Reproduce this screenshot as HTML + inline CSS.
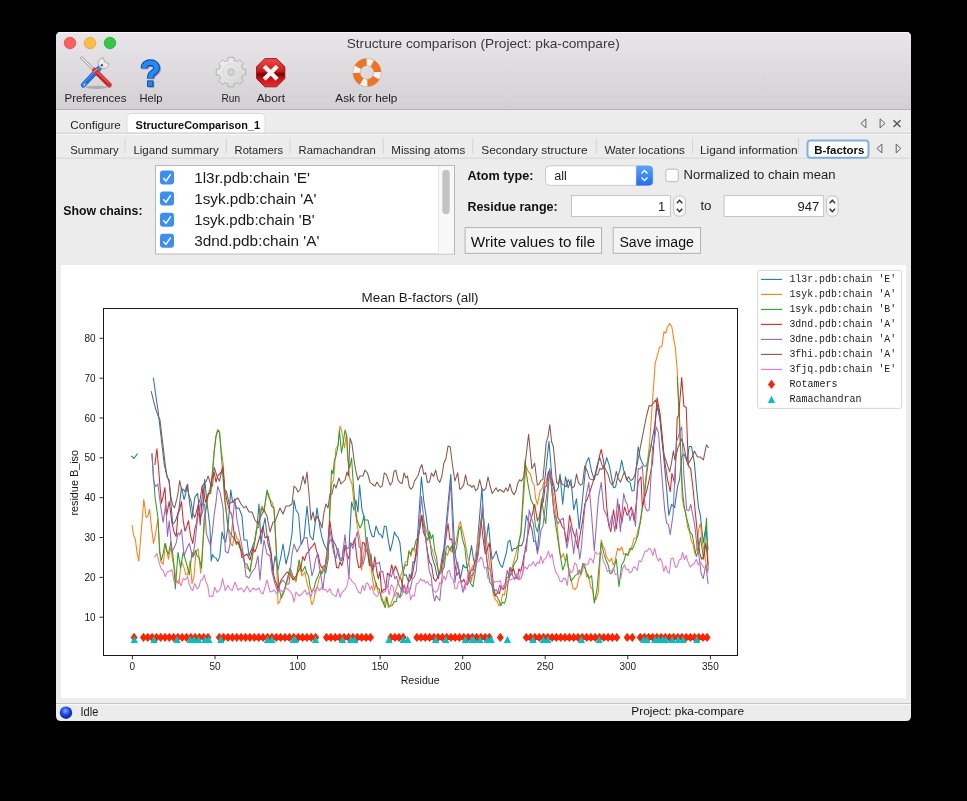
<!DOCTYPE html>
<html><head><meta charset="utf-8"><title>Structure comparison</title>
<style>html,body{margin:0;padding:0;background:#000;overflow:hidden}svg{display:block;will-change:transform}</style></head>
<body><svg width="967" height="801" viewBox="0 0 967 801">
<rect width="967" height="801" fill="#000"/>
<defs><linearGradient id="tb" x1="0" y1="0" x2="0" y2="1"><stop offset="0" stop-color="#e8e6e8"/><stop offset="1" stop-color="#d2d0d2"/></linearGradient><clipPath id="win"><path d="M61,32 H906 Q911,32 911,37 V716 Q911,721 906,721 H61 Q56,721 56,716 V37 Q56,32 61,32Z"/></clipPath><radialGradient id="sph" cx="0.45" cy="0.35" r="0.6"><stop offset="0" stop-color="#8fb0ff"/><stop offset="0.5" stop-color="#1f4df0"/><stop offset="1" stop-color="#0a20a0"/></radialGradient><linearGradient id="stop" x1="0" y1="0" x2="0" y2="1"><stop offset="0" stop-color="#f04a4a"/><stop offset="0.45" stop-color="#d01818"/><stop offset="0.55" stop-color="#7a0000"/><stop offset="0.7" stop-color="#c81010"/><stop offset="1" stop-color="#e83030"/></linearGradient><linearGradient id="gear" x1="0" y1="0" x2="1" y2="1"><stop offset="0" stop-color="#f2f2f2"/><stop offset="1" stop-color="#d2d2d2"/></linearGradient><linearGradient id="combo" x1="0" y1="0" x2="0" y2="1"><stop offset="0" stop-color="#5aa2fa"/><stop offset="1" stop-color="#1f6ff0"/></linearGradient><clipPath id="axclip"><rect x="103.8" y="308.9" width="633.2" height="346"/></clipPath></defs>
<g clip-path="url(#win)">
<rect x="56" y="32" width="855" height="689" fill="#ececec"/>
<rect x="56" y="32" width="855" height="77" fill="url(#tb)"/>
<rect x="56" y="32" width="855" height="1" fill="#f6f6f6"/>
<rect x="56" y="109" width="855" height="1" fill="#b6b4b6"/>
</g>
<circle cx="70" cy="43" r="5.8" fill="#fc605c" stroke="#e0443e" stroke-width="0.7"/>
<circle cx="90" cy="43" r="5.8" fill="#fdbc40" stroke="#dea236" stroke-width="0.7"/>
<circle cx="110" cy="43" r="5.8" fill="#34c84a" stroke="#1aab29" stroke-width="0.7"/>
<text x="346.7" y="47.5" font-family="Liberation Sans" font-size="13" font-weight="400" fill="#3a3a3a" textLength="273" lengthAdjust="spacingAndGlyphs">Structure comparison (Project: pka-compare)</text>
<ellipse cx="96.5" cy="87.3" rx="11" ry="1.6" fill="#8a8a8a" opacity="0.55"/>
<line x1="81.4" y1="57.8" x2="95" y2="70.8" stroke="#8c8c8c" stroke-width="2.6" stroke-linecap="round"/>
<line x1="81.4" y1="57.8" x2="95" y2="70.8" stroke="#f4f4f4" stroke-width="1.3" stroke-linecap="round"/>
<line x1="99.5" y1="68" x2="83.4" y2="85" stroke="#1f5fc8" stroke-width="5.2" stroke-linecap="round"/>
<line x1="99.5" y1="68" x2="83.4" y2="85" stroke="#3c8cf0" stroke-width="3.4" stroke-linecap="round"/>
<line x1="95" y1="74" x2="86" y2="83" stroke="#1e62d0" stroke-width="1.2" stroke-linecap="round"/>
<circle cx="84.6" cy="84.6" r="0.8" fill="#e8f0ff"/>
<path d="M108.98,63.67 A5.4,5.4 0 1 1 103.13,57.82 L104.80,62.00 Z" fill="#ececec" stroke="#9a9a9a" stroke-width="0.8"/>
<circle cx="101.9" cy="65.2" r="1.2" fill="#555"/>
<path d="M93.2,71.3 L96.2,68.6 L110.8,83.6 Q111.2,86.6 108.2,86.4 Z" fill="#b81e1e"/>
<line x1="94.5" y1="70.2" x2="109.3" y2="85" stroke="#d93434" stroke-width="5" stroke-linecap="round"/>
<line x1="97" y1="74.5" x2="108" y2="85" stroke="#a81616" stroke-width="1.3" stroke-linecap="round" opacity="0.7"/>
<line x1="97.5" y1="72.5" x2="108.5" y2="83" stroke="#f09090" stroke-width="0.8" stroke-linecap="round" opacity="0.8"/>
<line x1="93.5" y1="72.2" x2="97" y2="69" stroke="#f6e0e0" stroke-width="0.9"/>
<g transform="translate(0.9,0.9)" opacity="0.45"><path d="M144,68.3 C144,64.5 146.8,62.6 150.3,62.6 C154,62.6 156.6,64.7 156.6,67.6 C156.6,70.4 154.5,71.6 152.5,73.1 C150.8,74.4 150.3,75.5 150.3,78.4" fill="none" stroke="#2a1a70" stroke-width="6.8"/><rect x="147.3" y="80.7" width="6" height="6" fill="#2a1a70"/></g>
<path d="M144,68.3 C144,64.5 146.8,62.6 150.3,62.6 C154,62.6 156.6,64.7 156.6,67.6 C156.6,70.4 154.5,71.6 152.5,73.1 C150.8,74.4 150.3,75.5 150.3,78.4" fill="none" stroke="#163a8c" stroke-width="6.6"/>
<rect x="147.6" y="80.9" width="5.4" height="5.4" fill="#1c8dff" stroke="#163a8c" stroke-width="0.9"/>
<path d="M144,68.3 C144,64.5 146.8,62.6 150.3,62.6 C154,62.6 156.6,64.7 156.6,67.6 C156.6,70.4 154.5,71.6 152.5,73.1 C150.8,74.4 150.3,75.5 150.3,78.4" fill="none" stroke="#1c8dff" stroke-width="4.9"/>
<path d="M242.82,69.08 L245.73,69.27 L245.73,74.93 L242.82,75.12 L241.49,78.32 L243.42,80.51 L239.41,84.52 L237.22,82.59 L234.02,83.92 L233.83,86.83 L228.17,86.83 L227.98,83.92 L224.78,82.59 L222.59,84.52 L218.58,80.51 L220.51,78.32 L219.18,75.12 L216.27,74.93 L216.27,69.27 L219.18,69.08 L220.51,65.88 L218.58,63.69 L222.59,59.68 L224.78,61.61 L227.98,60.28 L228.17,57.37 L233.83,57.37 L234.02,60.28 L237.22,61.61 L239.41,59.68 L243.42,63.69 L241.49,65.88Z" fill="url(#gear)" stroke="#a6a6a6" stroke-width="0.8"/>
<circle cx="231" cy="72.1" r="8" fill="none" stroke="#dcdcdc" stroke-width="1"/>
<circle cx="231" cy="72.1" r="3.3" fill="#d6d4d6" stroke="#a8a8a8" stroke-width="0.7"/>
<path d="M284.84,78.56 L276.56,86.84 L264.84,86.84 L256.56,78.56 L256.56,66.84 L264.84,58.56 L276.56,58.56 L284.84,66.84Z" fill="url(#stop)" stroke="#8a0a0a" stroke-width="0.8"/>
<path d="M264.2,66.2 L277.2,79.2 M277.2,66.2 L264.2,79.2" stroke="#f4f4f4" stroke-width="4.2" stroke-linecap="butt"/>
<circle cx="367" cy="72.5" r="10.5" fill="none" stroke="#7b7b9a" stroke-width="8" opacity="0.35"/>
<circle cx="367" cy="72.5" r="10.5" fill="none" stroke="#f2731f" stroke-width="7"/>
<path d="M377.49,72.13 A10.5,10.5 0 0 1 376.09,77.75" fill="none" stroke="#f4f4f4" stroke-width="7"/>
<path d="M367.37,82.99 A10.5,10.5 0 0 1 361.75,81.59" fill="none" stroke="#f4f4f4" stroke-width="7"/>
<path d="M356.51,72.87 A10.5,10.5 0 0 1 357.91,67.25" fill="none" stroke="#f4f4f4" stroke-width="7"/>
<path d="M366.63,62.01 A10.5,10.5 0 0 1 372.25,63.41" fill="none" stroke="#f4f4f4" stroke-width="7"/>
<text x="64.6" y="101.5" font-family="Liberation Sans" font-size="11.8" font-weight="400" fill="#1e1e1e" textLength="61.8" lengthAdjust="spacingAndGlyphs">Preferences</text>
<text x="139.4" y="101.5" font-family="Liberation Sans" font-size="11.8" font-weight="400" fill="#1e1e1e" textLength="23" lengthAdjust="spacingAndGlyphs">Help</text>
<text x="221.5" y="101.5" font-family="Liberation Sans" font-size="11.8" font-weight="400" fill="#1e1e1e" textLength="18.5" lengthAdjust="spacingAndGlyphs">Run</text>
<text x="256.7" y="101.5" font-family="Liberation Sans" font-size="11.8" font-weight="400" fill="#1e1e1e" textLength="28.4" lengthAdjust="spacingAndGlyphs">Abort</text>
<text x="335.3" y="101.5" font-family="Liberation Sans" font-size="11.8" font-weight="400" fill="#1e1e1e" textLength="62.1" lengthAdjust="spacingAndGlyphs">Ask for help</text>
<path d="M127,133 V117.5 Q127,113.5 131,113.5 H261 Q265,113.5 265,117.5 V133Z" fill="#ffffff" stroke="#d6d6d6" stroke-width="0.8"/>
<rect x="56" y="132.5" width="855" height="1.5" fill="#d8d8d8"/>
<rect x="56" y="134" width="855" height="1" fill="#f7f7f7"/>
<text x="70.3" y="129" font-family="Liberation Sans" font-size="11.5" font-weight="400" fill="#262626" textLength="50.5" lengthAdjust="spacingAndGlyphs">Configure</text>
<text x="135.6" y="129" font-family="Liberation Sans" font-size="11.5" font-weight="700" fill="#111" textLength="124.4" lengthAdjust="spacingAndGlyphs">StructureComparison_1</text>
<path d="M865.9,118.9 L860.9,123.4 L865.9,127.9Z" fill="none" stroke="#555" stroke-width="0.9"/>
<path d="M880.1,118.9 L885,123.4 L880.1,127.9Z" fill="none" stroke="#555" stroke-width="0.9"/>
<path d="M893.5,120.3 L900.5,127 M900.5,120.3 L893.5,127" stroke="#555" stroke-width="1.4"/>
<text x="70.3" y="153.5" font-family="Liberation Sans" font-size="11.5" font-weight="400" fill="#262626" textLength="48.3" lengthAdjust="spacingAndGlyphs">Summary</text>
<text x="133.4" y="153.5" font-family="Liberation Sans" font-size="11.5" font-weight="400" fill="#262626" textLength="85.3" lengthAdjust="spacingAndGlyphs">Ligand summary</text>
<text x="234.6" y="153.5" font-family="Liberation Sans" font-size="11.5" font-weight="400" fill="#262626" textLength="48.4" lengthAdjust="spacingAndGlyphs">Rotamers</text>
<text x="298.6" y="153.5" font-family="Liberation Sans" font-size="11.5" font-weight="400" fill="#262626" textLength="77.1" lengthAdjust="spacingAndGlyphs">Ramachandran</text>
<text x="391.3" y="153.5" font-family="Liberation Sans" font-size="11.5" font-weight="400" fill="#262626" textLength="73.9" lengthAdjust="spacingAndGlyphs">Missing atoms</text>
<text x="481.3" y="153.5" font-family="Liberation Sans" font-size="11.5" font-weight="400" fill="#262626" textLength="106.2" lengthAdjust="spacingAndGlyphs">Secondary structure</text>
<text x="604.4" y="153.5" font-family="Liberation Sans" font-size="11.5" font-weight="400" fill="#262626" textLength="80.6" lengthAdjust="spacingAndGlyphs">Water locations</text>
<text x="700" y="153.5" font-family="Liberation Sans" font-size="11.5" font-weight="400" fill="#262626" textLength="97.6" lengthAdjust="spacingAndGlyphs">Ligand information</text>
<rect x="124.5" y="138.7" width="1" height="15" fill="#d3d3d3"/>
<rect x="225.7" y="138.7" width="1" height="15" fill="#d3d3d3"/>
<rect x="289.5" y="138.7" width="1" height="15" fill="#d3d3d3"/>
<rect x="382.8" y="138.7" width="1" height="15" fill="#d3d3d3"/>
<rect x="472.3" y="138.7" width="1" height="15" fill="#d3d3d3"/>
<rect x="595.8" y="138.7" width="1" height="15" fill="#d3d3d3"/>
<rect x="692.1" y="138.7" width="1" height="15" fill="#d3d3d3"/>
<rect x="798.0" y="138.7" width="1" height="15" fill="#d3d3d3"/>
<rect x="56" y="157.5" width="855" height="1.2" fill="#d9d9d9"/>
<rect x="807.5" y="140.5" width="61" height="17.2" rx="3" fill="#ffffff" stroke="#7fb0e4" stroke-width="2"/>
<text x="814.2" y="153.5" font-family="Liberation Sans" font-size="11.5" font-weight="700" fill="#111" textLength="50.2" lengthAdjust="spacingAndGlyphs">B-factors</text>
<path d="M881.9,144.1 L876.9,148.5 L881.9,152.9Z" fill="none" stroke="#555" stroke-width="0.9"/>
<path d="M896.2,144.1 L900.9,148.5 L896.2,152.9Z" fill="none" stroke="#555" stroke-width="0.9"/>
<text x="63.2" y="215" font-family="Liberation Sans" font-size="12.5" font-weight="700" fill="#111" textLength="79.3" lengthAdjust="spacingAndGlyphs">Show chains:</text>
<rect x="155.5" y="165.5" width="299" height="88.5" fill="#ffffff" stroke="#b8b8b8" stroke-width="1"/>
<rect x="438.5" y="166" width="15.5" height="87.5" fill="#f8f8f8"/><rect x="438" y="166" width="1" height="87.5" fill="#e6e6e6"/>
<rect x="442.3" y="169.8" width="7.4" height="44.5" rx="3.7" fill="#c2c2c2"/>
<rect x="160" y="170.5" width="14" height="14" rx="3" fill="#3b8ef6"/>
<path d="M163.3,178.1 L166,181.1 L170.8,174.1" fill="none" stroke="#fff" stroke-width="1.5"/>
<text x="194.2" y="183.0" font-family="Liberation Sans" font-size="14.3" font-weight="400" fill="#1a1a1a" textLength="115.7" lengthAdjust="spacingAndGlyphs">1l3r.pdb:chain &#39;E&#39;</text>
<rect x="160" y="191.6" width="14" height="14" rx="3" fill="#3b8ef6"/>
<path d="M163.3,199.2 L166,202.2 L170.8,195.2" fill="none" stroke="#fff" stroke-width="1.5"/>
<text x="194.2" y="204.1" font-family="Liberation Sans" font-size="14.3" font-weight="400" fill="#1a1a1a" textLength="122.2" lengthAdjust="spacingAndGlyphs">1syk.pdb:chain &#39;A&#39;</text>
<rect x="160" y="212.7" width="14" height="14" rx="3" fill="#3b8ef6"/>
<path d="M163.3,220.3 L166,223.3 L170.8,216.3" fill="none" stroke="#fff" stroke-width="1.5"/>
<text x="194.2" y="225.2" font-family="Liberation Sans" font-size="14.3" font-weight="400" fill="#1a1a1a" textLength="120.4" lengthAdjust="spacingAndGlyphs">1syk.pdb:chain &#39;B&#39;</text>
<rect x="160" y="233.8" width="14" height="14" rx="3" fill="#3b8ef6"/>
<path d="M163.3,241.4 L166,244.4 L170.8,237.4" fill="none" stroke="#fff" stroke-width="1.5"/>
<text x="194.2" y="246.3" font-family="Liberation Sans" font-size="14.3" font-weight="400" fill="#1a1a1a" textLength="125.2" lengthAdjust="spacingAndGlyphs">3dnd.pdb:chain &#39;A&#39;</text>
<text x="467.4" y="180" font-family="Liberation Sans" font-size="12.5" font-weight="700" fill="#111" textLength="66" lengthAdjust="spacingAndGlyphs">Atom type:</text>
<rect x="545.5" y="165.8" width="107.3" height="19.6" rx="4" fill="#ffffff" stroke="#bdbdbd" stroke-width="0.8"/>
<path d="M636.2,165.8 H648.8 Q652.8,165.8 652.8,169.8 V181.4 Q652.8,185.4 648.8,185.4 H636.2Z" fill="url(#combo)"/>
<path d="M641.5,173.5 L644.5,170.5 L647.5,173.5 M641.5,177.5 L644.5,180.5 L647.5,177.5" fill="none" stroke="#fff" stroke-width="1.3"/>
<text x="554.3" y="180" font-family="Liberation Sans" font-size="12.5" font-weight="400" fill="#222" textLength="12.6" lengthAdjust="spacingAndGlyphs">all</text>
<rect x="665.8" y="169.2" width="12.5" height="12.5" rx="2.5" fill="#ffffff" stroke="#a9a9a9" stroke-width="0.8"/>
<text x="683.6" y="179.4" font-family="Liberation Sans" font-size="12.5" font-weight="400" fill="#1e1e1e" textLength="152" lengthAdjust="spacingAndGlyphs">Normalized to chain mean</text>
<text x="467.4" y="210.5" font-family="Liberation Sans" font-size="12.5" font-weight="700" fill="#111" textLength="90.3" lengthAdjust="spacingAndGlyphs">Residue range:</text>
<rect x="571.4" y="195.7" width="98.9" height="20.7" fill="#ffffff" stroke="#b8b8b8" stroke-width="0.8"/>
<rect x="673.7" y="195.9" width="11.7" height="20.3" rx="5" fill="#f8f8f8" stroke="#b5b5b5" stroke-width="0.8"/>
<path d="M676.85,203.2 L679.5500000000001,200.2 L682.2500000000001,203.2 M676.85,208.8 L679.5500000000001,211.8 L682.2500000000001,208.8" fill="none" stroke="#2a2a2a" stroke-width="1.3"/>
<text x="665.3" y="210.5" font-family="Liberation Sans" font-size="13" font-weight="400" fill="#222" text-anchor="end">1</text>
<rect x="724.1" y="195.7" width="99.6" height="20.7" fill="#ffffff" stroke="#b8b8b8" stroke-width="0.8"/>
<rect x="826.5" y="195.9" width="11.7" height="20.3" rx="5" fill="#f8f8f8" stroke="#b5b5b5" stroke-width="0.8"/>
<path d="M829.65,203.2 L832.35,200.2 L835.0500000000001,203.2 M829.65,208.8 L832.35,211.8 L835.0500000000001,208.8" fill="none" stroke="#2a2a2a" stroke-width="1.3"/>
<text x="819.3" y="210.5" font-family="Liberation Sans" font-size="13" font-weight="400" fill="#222" text-anchor="end">947</text>
<text x="700.4" y="210.4" font-family="Liberation Sans" font-size="13" font-weight="400" fill="#222" textLength="11.1" lengthAdjust="spacingAndGlyphs">to</text>
<rect x="465.1" y="227.6" width="136.5" height="25.7" fill="#f3f3f3" stroke="#ababab" stroke-width="0.9"/>
<text x="470.8" y="246.5" font-family="Liberation Sans" font-size="14" font-weight="400" fill="#111" textLength="124.4" lengthAdjust="spacingAndGlyphs">Write values to file</text>
<rect x="613.2" y="227.6" width="87.4" height="25.7" fill="#f3f3f3" stroke="#ababab" stroke-width="0.9"/>
<text x="619.4" y="246.5" font-family="Liberation Sans" font-size="14" font-weight="400" fill="#111" textLength="74.5" lengthAdjust="spacingAndGlyphs">Save image</text>
<rect x="61" y="265" width="845" height="433" fill="#ffffff"/>
<text x="361.6" y="302.1" font-family="Liberation Sans" font-size="12.5" font-weight="400" fill="#1a1a1a" textLength="117" lengthAdjust="spacingAndGlyphs">Mean B-factors (all)</text>
<g clip-path="url(#axclip)">
<path d="M131.4,456 L134,458.5 L137.5,453.5" fill="none" stroke="#1f77b4" stroke-width="1.1"/>
<path d="M153.4,377.9 L155.7,394.8 L158.0,410.0 L164.3,465.0 L166.8,475.4 L169.2,482.2 L172.7,524.2 L174.5,522.4 L176.2,519.0 L178.8,510.2 L181.5,487.5 L184.1,499.7 L185.8,493.0 L187.6,484.0 L189.8,504.7 L192.0,519.0 L194.8,497.4 L197.6,493.4 L200.2,517.9 L202.9,510.9 L204.6,479.4 L207.2,503.9 L209.9,526.6 L211.2,560.9 L212.5,554.6 L214.2,557.1 L216.0,558.1 L217.8,561.4 L219.7,556.9 L222.1,531.9 L223.8,538.6 L225.6,542.4 L228.2,524.9 L230.8,489.9 L232.6,502.2 L234.7,502.0 L236.8,508.6 L239.0,508.0 L242.0,516.0 L244.0,540.0 L247.0,540.0 L249.0,556.0 L252.0,548.0 L255.0,540.0 L257.0,526.0 L259.0,504.0 L261.0,544.0 L263.0,528.0 L265.0,518.0 L268.0,544.0 L271.0,554.0 L273.0,572.0 L275.0,556.0 L278.0,570.0 L281.0,556.0 L283.0,544.0 L286.0,564.0 L289.0,552.0 L292.0,534.0 L294.0,500.0 L296.0,510.0 L298.6,514.0 L301.0,544.0 L304.0,538.0 L307.0,506.0 L310.0,536.0 L313.0,540.0 L315.0,524.9 L317.0,508.0 L320.0,528.0 L322.0,537.4 L324.0,544.0 L327.0,550.0 L330.0,540.0 L333.0,540.0 L336.0,546.0 L338.0,553.6 L340.0,560.0 L341.8,560.8 L343.6,547.0 L345.4,545.0 L347.2,548.3 L349.0,548.0 L351.6,502.0 L354.0,510.0 L356.0,500.0 L358.0,512.0 L359.6,485.0 L362.0,510.0 L365.0,520.0 L368.0,520.0 L370.0,529.7 L372.0,536.0 L374.0,536.9 L376.0,526.0 L379.0,534.0 L380.7,534.6 L382.5,538.0 L384.4,526.0 L386.2,526.4 L388.3,540.4 L390.3,551.1 L392.4,542.6 L394.5,531.9 L396.3,535.7 L398.1,537.4 L399.9,542.9 L402.7,570.3 L404.4,575.3 L406.1,574.7 L407.8,580.0 L409.6,581.3 L411.3,576.8 L413.0,561.6 L414.7,562.7 L416.4,553.8 L421.4,476.9 L423.7,500.3 L426.0,515.4 L427.9,530.4 L429.7,538.4 L431.5,553.8 L433.3,561.2 L435.0,565.8 L436.7,574.6 L438.4,578.6 L440.2,569.4 L442.1,556.9 L443.9,548.4 L450.8,474.2 L454.9,552.5 L457.0,564.8 L459.1,570.3 L460.4,578.6 L463.2,564.8 L465.1,567.6 L467.4,567.6 L469.4,558.4 L471.5,545.6 L473.5,559.5 L475.6,564.8 L479.7,515.4 L481.9,487.9 L485.2,548.4 L488.5,523.6 L490.3,544.3 L492.1,559.3 L494.1,556.1 L496.2,551.1 L498.3,559.5 L500.3,564.8 L502.4,567.3 L504.5,559.3 L506.3,553.1 L508.1,541.9 L509.9,540.1 L512.0,551.3 L514.1,548.4 L515.9,548.6 L517.7,546.1 L519.6,545.6 L521.6,545.7 L523.7,540.1 L526.4,515.4 L528.3,521.7 L530.1,524.3 L531.9,529.1 L533.8,541.6 L535.6,540.9 L537.4,551.1 L541.5,504.4 L543.6,490.3 L545.7,471.4 L549.0,441.2 L552.5,485.2 L554.6,491.2 L556.6,490.7 L558.3,487.4 L560.0,474.1 L562.7,504.3 L565.5,476.8 L568.2,487.8 L571.0,479.6 L573.7,509.8 L576.5,498.8 L579.2,529.0 L582.0,504.3 L586.1,463.1 L588.8,457.6 L591.6,471.4 L594.3,479.6 L597.0,465.9 L599.8,457.6 L601.8,464.4 L603.9,468.6 L606.7,457.6 L609.4,465.9 L611.5,477.3 L613.5,487.8 L615.6,486.9 L617.6,476.8 L619.7,470.8 L621.7,460.4 L623.8,470.7 L625.9,476.8 L627.9,481.2 L630.0,482.3 L632.0,490.9 L634.1,490.6 L638.2,446.7 L640.3,458.3 L642.3,463.1 L644.4,466.3 L646.4,465.9 L649.2,454.9 L652.5,437.4 L654.7,426.2 L657.0,406.0 L660.0,419.4 L663.0,449.4 L666.7,489.9 L668.8,515.4 L671.6,504.4 L674.6,507.6 L677.5,486.9 L679.6,479.0 L681.7,456.9 L683.9,453.9 L686.9,461.4 L689.2,446.4 L691.4,446.4 L694.4,462.9 L696.7,489.9 L698.6,507.7 L700.4,515.4 L703.2,542.9 L705.9,526.4 L708.1,549.7" fill="none" stroke="#1f77b4" stroke-width="1.05" stroke-linejoin="round"/>
<path d="M132.0,525.0 L133.7,535.4 L135.4,539.5 L137.1,553.0 L138.8,561.2 L143.8,499.5 L146.2,517.5 L147.9,515.8 L149.6,509.5 L151.6,528.2 L153.5,543.4 L155.7,533.2 L157.9,519.0 L160.5,560.9 L163.1,564.4 L165.7,543.4 L168.4,559.2 L171.0,546.9 L172.7,560.9 L174.5,567.2 L176.2,581.9 L178.8,583.6 L181.5,560.9 L184.1,567.9 L185.8,574.4 L187.6,574.9 L190.2,560.9 L192.0,583.6 L194.0,576.7 L196.0,551.9 L198.1,548.7 L200.7,573.1 L204.2,527.7 L205.5,514.4 L208.1,495.2 L210.7,491.7 L212.5,470.7 L214.2,451.5 L216.0,435.7 L217.7,429.6 L219.5,431.4 L221.2,449.7 L223.4,465.5 L224.7,493.4 L227.3,521.4 L230.0,542.4 L232.6,545.9 L235.0,532.0 L237.0,539.1 L239.0,540.0 L241.0,549.3 L243.0,556.0 L245.0,565.8 L247.0,568.0 L250.0,570.0 L252.0,558.0 L255.0,538.0 L257.0,526.0 L258.7,523.0 L260.3,510.2 L262.0,506.0 L264.0,510.0 L267.0,492.0 L269.0,498.0 L272.0,502.0 L274.0,510.0 L276.0,544.0 L278.0,604.0 L279.7,601.7 L281.4,596.0 L284.0,590.0 L287.0,582.0 L290.0,572.0 L293.0,578.0 L296.0,582.0 L299.0,564.0 L302.0,576.0 L305.0,572.0 L306.7,582.0 L308.5,587.8 L310.2,597.0 L311.9,604.7 L313.8,600.6 L315.6,589.7 L317.4,586.3 L319.2,578.0 L321.1,574.0 L322.9,567.6 L324.6,568.7 L326.3,555.5 L328.0,560.0 L330.0,512.0 L331.6,484.0 L333.6,480.0 L336.0,448.0 L338.0,446.0 L340.0,426.0 L342.0,432.0 L344.4,448.0 L346.4,434.0 L347.6,456.0 L349.6,478.0 L352.0,484.0 L354.0,504.0 L357.0,524.0 L360.0,540.0 L361.5,570.3 L364.0,552.0 L367.0,537.4 L372.5,578.6 L374.4,590.2 L376.3,582.8 L378.2,592.6 L380.2,593.0 L382.1,597.8 L384.1,604.1 L386.2,596.4 L388.3,607.6 L390.3,606.0 L405.4,562.1 L407.3,561.4 L409.1,550.4 L410.9,556.4 L412.8,548.0 L414.6,551.1 L416.4,548.4 L418.3,537.4 L420.1,524.6 L421.9,515.4 L438.4,570.3 L440.2,570.4 L442.1,562.9 L443.9,561.1 L445.7,552.5 L447.6,555.4 L449.4,548.4 L451.3,551.7 L453.1,546.3 L455.0,545.6 L456.8,538.5 L458.6,526.7 L460.4,521.6 L462.1,529.7 L463.8,535.9 L465.5,544.2 L467.5,556.6 L469.5,565.6 L471.5,581.3 L482.5,509.9 L493.5,595.1 L495.3,599.5 L497.1,601.2 L499.0,606.0 L500.8,603.6 L502.6,594.1 L504.5,594.9 L506.3,581.9 L508.1,580.9 L509.9,575.8 L520.9,534.6 L525.9,465.9 L528.2,471.4 L530.5,474.2 L532.3,482.3 L534.0,484.5 L535.7,498.7 L537.4,504.4 L540.2,490.7 L542.1,488.6 L544.0,481.9 L545.9,483.3 L547.9,473.9 L549.8,471.4 L551.6,487.0 L553.4,493.8 L555.3,507.1 L560.0,553.7 L561.7,557.5 L563.4,553.5 L565.1,560.3 L566.9,559.2 L568.9,571.6 L571.0,578.4 L573.0,588.6 L575.1,589.4 L577.0,586.8 L578.9,577.7 L580.9,574.8 L582.8,563.4 L584.7,564.7 L586.6,577.1 L588.5,574.8 L590.5,586.9 L592.4,589.5 L594.3,600.3 L596.4,598.8 L598.4,592.1 L601.2,540.0 L602.9,545.7 L604.6,548.7 L606.3,556.3 L608.0,559.2 L609.7,561.6 L611.5,558.2 L613.2,565.0 L614.9,561.9 L617.6,548.2 L619.7,550.4 L621.7,547.0 L623.8,554.6 L625.9,553.7 L627.9,555.8 L630.0,550.9 L632.0,546.2 L634.1,538.2 L636.2,538.3 L638.2,529.0 L640.3,523.8 L642.3,509.8 L649.7,441.7 L655.2,363.1 L657.4,355.3 L659.6,347.2 L661.8,346.5 L664.0,331.5 L665.7,333.3 L667.4,327.0 L669.7,323.6 L671.9,327.0 L673.6,338.6 L675.3,347.2 L677.2,370.0 L678.7,407.5 L680.2,444.9 L682.2,498.7 L684.0,507.8 L685.8,512.9 L687.6,527.0 L689.5,531.9 L691.3,540.7 L693.1,544.4 L694.9,553.8 L696.8,548.7 L698.6,529.7 L700.4,523.6 L702.5,542.9 L704.6,553.8 L706.3,565.7 L708.1,573.1" fill="none" stroke="#ff7f0e" stroke-width="1.05" stroke-linejoin="round"/>
<path d="M151.9,453.4 L155.1,497.7 L157.9,517.2 L159.6,552.2 L161.4,560.1 L163.1,553.9 L164.9,543.4 L166.6,550.5 L168.4,553.9 L171.0,541.7 L173.6,560.9 L175.3,588.9 L178.0,552.2 L180.6,567.9 L183.2,552.2 L185.0,558.3 L186.7,564.4 L189.3,574.9 L192.0,552.2 L193.7,556.1 L195.5,550.4 L197.2,556.1 L199.0,557.4 L201.6,567.9 L204.2,517.2 L205.5,510.9 L208.1,493.4 L210.7,493.4 L212.5,472.4 L214.2,451.5 L216.0,436.6 L217.7,430.5 L219.5,432.2 L221.7,459.3 L224.7,500.4 L226.5,514.8 L228.2,528.4 L230.0,532.8 L231.7,535.4 L234.7,539.2 L236.3,544.6 L238.0,542.0 L239.7,548.0 L241.3,549.1 L243.0,554.0 L245.0,563.9 L247.0,564.0 L250.0,572.0 L252.0,560.0 L255.0,540.0 L257.0,528.0 L258.7,527.3 L260.3,514.4 L262.0,508.0 L264.0,512.0 L267.0,490.0 L269.0,496.0 L271.5,506.0 L274.0,508.0 L276.5,554.0 L279.0,588.0 L281.4,598.0 L284.0,592.0 L287.0,580.0 L290.0,568.0 L293.0,576.0 L296.0,580.0 L299.0,560.0 L302.0,572.0 L305.0,566.4 L306.8,573.1 L308.5,575.9 L310.2,587.3 L311.9,592.3 L314.0,588.4 L316.0,580.7 L318.1,575.9 L320.2,570.3 L322.0,573.8 L323.8,569.1 L325.7,573.1 L328.0,560.0 L330.0,502.0 L331.6,470.0 L333.0,474.0 L334.4,460.0 L336.0,456.0 L338.0,446.0 L339.4,430.0 L341.5,453.0 L343.6,440.0 L345.0,430.0 L346.8,436.0 L348.0,460.0 L349.6,468.0 L351.6,458.0 L353.0,480.0 L355.0,504.0 L357.0,520.0 L360.0,528.0 L362.0,524.0 L364.0,516.0 L366.0,540.0 L368.0,552.0 L369.7,564.8 L371.0,554.0 L373.1,572.9 L375.2,581.3 L377.3,588.1 L379.3,589.0 L381.4,599.5 L383.5,603.3 L385.2,607.7 L386.9,597.3 L388.6,605.7 L390.3,606.0 L392.3,605.4 L394.2,601.4 L396.1,601.8 L398.0,592.8 L399.9,597.8 L401.8,588.1 L403.6,570.6 L405.4,564.8 L407.2,565.5 L408.9,551.7 L410.6,554.1 L412.3,548.4 L414.1,548.6 L416.0,540.6 L417.8,537.4 L419.9,528.3 L421.9,515.4 L424.0,528.3 L426.0,537.4 L427.8,540.3 L429.5,531.4 L431.2,538.7 L432.9,534.6 L434.7,550.7 L436.6,557.2 L438.4,573.1 L440.5,573.7 L442.5,570.3 L444.4,566.8 L446.2,547.9 L448.0,545.6 L449.8,550.0 L451.5,546.1 L453.2,552.8 L454.9,553.8 L456.8,546.2 L458.6,531.0 L460.4,526.4 L462.6,539.6 L464.8,547.0 L466.8,565.9 L468.7,575.8 L470.8,583.7 L472.9,586.8 L474.9,574.4 L477.0,559.3 L482.5,512.6 L488.0,570.3 L489.8,582.4 L491.6,584.5 L493.5,592.3 L495.3,595.9 L497.1,596.8 L499.0,600.5 L500.8,605.7 L502.6,602.3 L504.5,603.3 L506.3,597.4 L508.1,582.7 L509.9,575.8 L511.8,574.0 L513.6,565.3 L515.4,562.1 L517.3,559.3 L519.1,541.7 L520.9,531.9 L525.1,460.4 L526.8,476.3 L528.6,487.9 L531.0,499.8 L533.3,504.4 L535.4,525.8 L537.4,531.9 L539.5,520.3 L541.5,498.9 L543.6,512.3 L545.7,523.6 L549.8,468.7 L553.9,512.6 L560.0,553.7 L562.7,570.1 L564.8,564.5 L566.9,553.7 L568.9,572.0 L571.0,581.1 L573.0,578.7 L575.1,575.6 L577.2,574.4 L579.2,570.1 L581.0,574.2 L582.9,563.5 L584.7,567.4 L586.8,573.0 L588.8,578.4 L591.6,575.6 L594.3,603.1 L597.0,589.4 L601.2,542.7 L603.9,553.7 L606.0,560.0 L608.0,564.7 L610.1,573.7 L612.1,572.9 L614.2,566.8 L616.3,559.2 L619.0,586.6 L621.7,564.7 L623.8,561.6 L625.9,553.7 L627.9,554.9 L630.0,548.2 L632.0,549.7 L634.1,545.4 L636.2,540.2 L638.2,534.5 L640.3,520.9 L642.3,507.0 L644.4,497.8 L646.4,476.8 L649.2,454.9 L651.7,443.4 M677.2,376.7 L679.4,414.9 L680.9,453.9 L682.4,489.9 L684.0,504.4 L686.0,516.0 L688.1,523.6 L690.1,532.1 L692.2,534.6 L694.3,546.0 L696.3,556.6 L698.4,550.2 L700.4,537.4 L703.7,559.3 L706.5,518.1 L708.1,570.3" fill="none" stroke="#2ca02c" stroke-width="1.05" stroke-linejoin="round"/>
<path d="M154.8,465.0 L156.9,448.8 L158.7,470.0 L161.4,503.2 L163.1,496.3 L164.9,487.5 L166.6,515.5 L169.2,501.5 L171.9,522.4 L174.0,531.9 L176.2,536.4 L178.0,513.7 L179.7,509.3 L181.5,501.5 L183.2,520.5 L185.0,531.2 L186.7,526.7 L188.5,520.7 L190.6,535.9 L192.8,543.4 L195.0,528.4 L196.7,522.4 L198.5,503.9 L200.2,524.9 L202.9,486.4 L205.5,502.2 L208.1,495.2 L209.9,490.0 L211.6,479.4 L214.2,472.4 L216.0,482.2 L217.7,475.9 L220.9,472.4 L223.0,467.2 L224.7,489.9 L227.3,502.2 L229.5,510.7 L231.7,514.4 L235.0,540.0 L236.7,542.5 L238.3,541.6 L240.0,546.0 L242.0,558.0 L244.0,556.0 L247.0,554.0 L250.0,560.0 L253.0,548.0 L255.0,551.9 L257.0,546.0 L260.0,536.0 L263.0,526.0 L265.0,538.0 L268.0,536.0 L271.0,552.0 L273.0,572.0 L275.0,580.0 L278.0,588.0 L281.0,580.0 L284.0,576.0 L287.0,572.0 L290.0,574.0 L293.0,580.0 L296.0,576.0 L299.0,570.0 L300.9,567.4 L302.7,556.5 L304.6,560.4 L306.4,553.8 L308.5,551.8 L310.5,548.3 L312.6,546.0 L314.7,542.9 L316.5,551.1 L318.3,555.1 L320.2,564.8 L322.0,568.0 L323.8,565.7 L325.7,567.6 L329.8,520.9 L336.6,567.6 L338.4,568.1 L340.1,561.7 L341.8,565.6 L343.5,559.3 L345.0,545.6 L347.1,554.7 L349.1,559.3 L350.4,542.9 L352.6,544.9 L354.8,538.7 L356.8,557.6 L358.7,567.6 L360.6,567.1 L362.4,542.4 L364.2,542.9 L365.9,549.2 L367.7,552.9 L369.4,565.5 L371.1,564.8 L372.9,570.9 L374.8,556.8 L376.6,570.3 L378.3,578.8 L380.0,571.6 L381.7,592.6 L383.5,589.6 L385.5,589.4 L387.6,573.0 L389.6,575.9 L391.7,564.8 L393.5,572.4 L395.4,566.0 L397.2,570.3 L399.3,577.2 L401.3,579.4 L403.4,591.7 L405.4,592.3 L407.5,587.1 L409.6,574.3 L411.6,578.5 L413.7,567.6 L421.4,515.4 L423.4,532.0 L425.4,537.0 L427.4,551.1 L429.5,562.4 L431.5,564.8 L433.6,578.4 L435.7,581.3 L437.5,577.8 L439.3,572.0 L441.2,570.3 L448.0,523.6 L449.9,539.7 L451.7,538.7 L453.5,553.8 L455.0,564.8 L456.8,575.4 L458.6,572.0 L460.4,579.9 L462.1,582.0 L463.8,579.2 L465.5,584.1 L467.5,584.9 L469.5,572.9 L471.5,570.3 L473.3,569.2 L475.1,560.6 L477.0,559.3 L479.0,545.0 L481.1,520.9 L483.2,539.3 L485.2,553.8 L487.3,549.3 L489.3,542.9 L493.5,586.8 L495.5,595.8 L497.6,592.3 L499.4,593.6 L501.2,585.7 L503.1,589.6 L504.8,587.2 L506.5,577.6 L508.2,577.3 L509.9,567.6 L511.8,571.4 L513.6,568.9 L515.4,575.8 L517.2,578.8 L518.9,568.9 L520.6,571.3 L522.3,564.8 L530.5,520.9 L532.6,513.2 L534.7,504.4 L537.4,520.9 L539.5,516.1 L541.5,504.4 L543.3,502.0 L545.0,486.9 L546.7,485.5 L548.4,471.4 L550.2,477.3 L552.1,479.7 L553.9,485.2 L556.0,502.5 L558.0,518.1 L560.0,520.7 L562.1,526.3 L564.1,529.0 L566.9,542.7 L569.6,515.3 L572.3,529.0 L575.1,537.2 L577.8,548.2 L580.6,531.7 L582.6,520.9 L584.7,504.3 L587.4,498.8 L590.2,490.6 L592.9,482.3 L595.0,475.5 L597.0,468.6 L599.8,454.9 L601.2,449.4 L603.9,463.1 L606.7,507.0 L608.7,525.2 L610.8,531.7 L613.5,509.8 L616.3,529.0 L619.0,504.3 L621.7,523.5 L624.5,507.0 L627.2,515.3 L629.3,511.7 L631.4,507.0 L634.1,520.7 L636.2,503.9 L638.2,482.3 L641.0,476.8 L642.3,507.0 L645.1,496.0 L647.1,489.2 L649.2,479.6 L652.5,462.9 L657.0,397.7 L660.0,413.4 L664.5,459.9 L667.5,479.4 L670.3,491.6 L671.9,473.4 L674.9,483.9 L677.2,417.9 L678.7,414.9 L681.7,377.5 L683.9,406.0 L686.2,407.5 L688.4,465.9 L690.7,468.9 L693.2,490.0 L697.7,537.4 L699.8,553.4 L701.8,559.3 L703.9,556.1 L705.9,542.9 L708.1,564.8" fill="none" stroke="#d62728" stroke-width="1.05" stroke-linejoin="round"/>
<path d="M151.9,453.4 L153.5,480.5 L155.7,486.6 L157.9,484.0 L160.5,505.0 L163.1,522.4 L165.7,505.0 L167.5,536.4 L169.2,520.7 L171.9,552.2 L174.5,546.9 L176.2,543.0 L178.0,532.9 L179.7,535.0 L181.5,529.4 L184.1,555.7 L186.7,548.7 L189.3,543.4 L191.1,550.6 L192.8,557.4 L195.0,542.4 L197.6,517.9 L199.4,511.7 L201.1,500.4 L202.9,505.7 L204.6,503.9 L206.4,533.6 L208.5,540.2 L210.7,545.9 L212.5,531.1 L214.2,514.4 L216.0,502.3 L217.7,486.4 L220.3,493.4 L223.0,507.4 L225.4,551.6 L228.2,552.9 L230.0,544.2 L231.7,531.9 L234.7,498.5 L237.0,520.0 L240.0,536.0 L243.0,552.0 L246.0,576.0 L249.0,578.0 L252.0,572.0 L255.0,568.0 L258.0,556.0 L260.0,580.0 L262.0,556.0 L264.0,540.0 L267.0,554.0 L270.0,556.0 L272.0,572.0 L275.0,584.0 L278.0,592.0 L280.0,584.0 L283.0,580.0 L286.0,584.0 L289.0,584.0 L292.0,554.0 L294.0,544.0 L297.0,552.0 L300.0,546.0 L302.0,543.2 L304.0,538.0 L307.0,537.4 L309.5,557.6 L311.9,575.8 L313.8,569.8 L315.6,559.6 L317.4,553.8 L319.2,565.9 L321.1,576.6 L322.9,589.6 L329.8,529.1 L331.8,542.0 L333.9,553.8 L336.0,558.7 L338.0,548.2 L340.1,558.4 L342.1,559.3 L345.0,534.6 L349.0,578.6 L350.5,542.9 L352.8,548.5 L355.1,540.1 L357.4,531.9 L359.2,546.9 L361.0,548.4 L362.9,564.8 L364.9,557.7 L367.0,537.4 L368.8,548.4 L370.6,555.9 L372.5,567.6 L374.2,567.0 L375.9,562.8 L377.6,563.7 L379.3,562.1 L381.1,571.9 L382.8,571.3 L384.5,581.5 L386.2,586.8 L387.9,587.2 L389.6,574.6 L391.4,576.8 L393.1,570.3 L394.8,578.9 L396.5,576.2 L398.2,583.4 L399.9,586.8 L402.0,592.1 L404.1,584.7 L406.1,594.1 L408.2,592.3 L410.2,589.6 L412.3,579.3 L414.4,577.0 L416.4,570.3 L421.4,496.2 L427.4,553.8 L429.2,571.0 L431.1,575.8 L432.9,592.3 L434.6,601.0 L436.3,595.4 L438.1,598.5 L439.8,600.5 L450.8,482.4 L454.9,582.7 L457.7,562.1 L459.8,575.4 L461.9,586.8 L463.1,592.3 L465.1,584.1 L467.4,584.1 L469.2,581.8 L471.0,575.0 L472.9,575.8 L474.7,569.9 L476.5,560.5 L478.4,553.8 L482.5,504.4 L486.6,559.3 L488.4,568.6 L490.3,569.5 L492.1,581.3 L494.1,591.1 L496.2,589.6 L497.9,592.5 L499.6,585.0 L501.4,588.9 L503.1,586.8 L505.1,583.8 L507.2,570.3 L509.0,576.5 L510.9,567.6 L512.7,575.8 L514.8,579.8 L516.8,573.9 L518.9,579.7 L520.9,578.6 L522.8,573.1 L524.6,552.6 L526.4,551.1 L529.2,509.9 L531.2,517.3 L533.3,523.6 L535.4,539.2 L537.4,553.8 L539.2,544.8 L541.1,529.4 L542.9,526.4 L549.8,468.7 L553.9,509.9 L556.0,519.2 L558.0,523.6 L560.0,520.7 L563.3,518.0 L565.1,536.1 L566.9,548.2 L568.6,538.7 L570.4,526.2 L573.7,553.7 L576.5,529.0 L579.8,559.2 L581.5,546.5 L583.3,523.5 L586.1,496.0 L588.8,482.3 L591.6,515.3 L594.3,550.9 L598.4,498.8 L601.2,482.3 L603.9,509.8 L606.7,515.3 L609.4,526.2 L612.1,515.3 L614.9,531.7 L617.6,498.8 L620.4,531.7 L623.7,493.3 L625.5,501.3 L627.2,504.3 L630.0,520.7 L632.7,509.8 L635.5,526.2 L638.2,468.6 L640.3,468.7 L642.3,465.9 L645.1,507.0 L647.1,511.1 L649.2,509.8 L652.5,447.9 L654.3,441.0 L656.2,426.9 L658.5,432.9 L663.0,489.9 L664.7,509.9 L666.6,523.1 L668.4,524.7 L670.2,534.6 L673.0,515.4 L676.4,441.9 L678.2,437.5 L679.9,431.1 L681.7,426.9 L683.9,474.9 L686.7,509.9 L688.8,510.7 L690.8,504.4 L692.9,515.6 L694.9,526.4 L697.0,546.9 L699.1,556.6 L701.1,573.3 L703.2,578.6 L705.9,564.8 L708.1,584.1" fill="none" stroke="#9467bd" stroke-width="1.05" stroke-linejoin="round"/>
<path d="M151.2,391.2 L153.6,401.2 L156.0,410.0 L158.0,415.6 L160.0,420.0 L165.4,465.9 L167.2,477.4 L169.0,479.6 L170.9,497.2 L172.7,505.0 L174.5,507.8 L176.2,501.5 L178.0,493.6 L179.7,480.5 L181.5,489.3 L183.2,489.2 L185.0,491.9 L186.7,485.7 L188.9,495.3 L191.1,501.5 L192.9,513.6 L194.8,517.6 L196.6,511.1 L198.5,503.9 L200.2,499.1 L202.0,486.4 L204.6,482.9 L206.4,480.8 L208.1,475.9 L210.7,484.7 L212.5,486.1 L214.2,467.2 L216.9,475.9 L219.5,481.2 L222.6,467.2 L224.7,489.9 L226.5,491.7 L229.1,503.9 L231.7,502.2 L235.0,500.0 L238.0,498.0 L241.0,504.0 L244.0,508.0 L246.0,506.0 L249.0,512.0 L252.0,512.0 L255.0,520.0 L258.0,524.0 L261.0,516.0 L264.0,510.0 L267.0,516.0 L270.0,532.0 L273.0,522.0 L275.0,521.5 L277.0,516.0 L280.0,508.0 L283.0,514.0 L286.0,506.0 L289.0,506.0 L292.0,504.0 L294.0,486.0 L296.0,488.0 L298.0,492.0 L300.0,490.0 L303.0,476.0 L305.0,484.0 L307.0,472.0 L309.0,494.0 L311.0,520.0 L313.0,512.0 L315.0,522.0 L317.0,516.0 L320.0,522.0 L322.0,528.0 L324.0,512.0 L326.0,504.0 L328.0,508.0 L330.0,494.0 L332.0,494.0 L334.0,484.0 L336.0,488.0 L339.0,478.0 L341.0,484.0 L343.0,482.0 L345.0,480.0 L347.0,472.0 L348.4,476.0 L350.0,438.0 L352.0,444.0 L354.0,460.0 L356.0,472.0 L358.0,480.0 L360.0,476.0 L363.0,476.0 L365.0,470.0 L367.5,473.0 L370.0,482.0 L372.0,484.0 L375.0,486.0 L377.0,482.0 L378.7,485.0 L380.4,487.3 L382.3,485.9 L384.3,472.8 L386.2,474.2 L388.3,480.1 L390.3,485.2 L392.2,482.1 L394.0,471.7 L395.8,470.1 L397.9,479.7 L399.9,482.4 L402.0,483.7 L404.1,472.8 L405.8,477.8 L407.5,476.1 L409.2,486.6 L410.9,489.3 L412.8,487.2 L414.6,480.9 L416.4,478.3 L418.3,475.1 L420.1,468.0 L421.9,464.6 L423.8,474.3 L425.6,472.6 L427.4,482.4 L429.5,481.9 L431.5,473.1 L433.6,476.5 L435.7,470.1 L437.7,479.3 L439.8,482.4 L441.8,476.5 L443.9,463.2 L446.0,458.2 L448.1,445.9 L450.2,446.7 L452.6,465.8 L454.9,481.0 L457.7,472.8 L459.8,489.5 L461.8,487.9 L463.7,484.9 L465.5,474.9 L467.8,484.9 L470.1,485.2 L471.9,487.4 L473.8,485.3 L475.6,490.7 L477.7,488.9 L479.7,479.7 L481.8,488.6 L483.8,490.7 L485.9,488.1 L488.0,476.9 L490.0,485.5 L492.1,493.4 L494.1,490.8 L496.2,487.9 L498.0,491.6 L499.9,489.4 L501.7,490.7 L503.8,492.2 L505.8,487.9 L507.9,491.2 L509.9,483.8 L512.0,491.6 L514.1,494.8 L515.9,491.1 L517.7,483.4 L519.6,479.7 L521.6,481.1 L523.7,476.9 L528.6,434.3 L531.9,468.7 L534.7,463.2 L537.4,485.2 L539.2,483.8 L541.1,480.1 L542.9,479.7 L546.2,442.6 L548.0,436.7 L549.8,424.7 L551.6,441.7 L553.4,446.7 L556.6,482.4 L558.3,484.3 L560.0,476.8 L562.1,484.4 L564.1,485.1 L566.2,486.8 L568.2,479.6 L570.3,484.5 L572.3,487.8 L574.4,486.3 L576.5,474.1 L578.5,482.7 L580.6,485.1 L582.6,484.1 L584.7,465.9 L587.4,471.4 L589.5,478.6 L591.6,479.6 L593.6,480.1 L595.7,474.1 L597.7,474.9 L599.8,468.6 L601.8,469.5 L603.9,465.9 L606.0,470.4 L608.0,474.1 L610.1,481.7 L612.1,485.1 L614.2,481.6 L616.3,471.4 L618.3,478.5 L620.4,482.3 L622.4,477.1 L624.5,471.4 L626.5,479.9 L628.6,476.8 L630.7,480.4 L632.7,479.6 L634.8,475.3 L636.8,465.9 L638.9,455.3 L641.0,443.9 L643.7,430.2 L646.4,416.5 L649.2,405.5 L651.0,406.0 L653.2,403.6 L655.5,400.0 L657.7,406.0 L660.0,417.9 L661.8,437.5 L663.7,453.9 L666.7,462.9 L669.7,471.9 L671.6,462.1 L673.4,450.9 L674.9,459.9 L677.9,447.9 L679.7,443.8 L681.4,438.9 L683.2,443.4 L685.4,453.9 L687.7,464.4 L690.7,459.9 L692.5,456.3 L694.4,450.9 L697.4,456.9 L700.4,456.9 L703.4,459.9 L706.4,444.9 L708.7,448.0" fill="none" stroke="#8c564b" stroke-width="1.05" stroke-linejoin="round"/>
<path d="M154.4,557.4 L156.9,553.3 L159.6,564.4 L161.4,569.2 L163.1,570.5 L165.3,576.5 L167.5,571.4 L169.7,571.2 L171.9,569.7 L174.5,583.6 L176.7,582.4 L178.8,580.1 L181.0,585.9 L183.2,578.4 L185.4,579.7 L187.6,576.6 L189.3,584.3 L191.1,588.9 L192.8,590.6 L194.6,583.6 L197.2,588.9 L199.0,587.2 L200.7,580.1 L202.4,579.7 L204.2,574.9 L205.9,581.7 L207.7,585.4 L209.4,596.6 L211.2,595.9 L212.9,596.6 L214.7,587.1 L216.9,592.4 L219.1,590.6 L220.8,587.7 L222.6,578.4 L225.2,590.6 L227.8,585.4 L230.0,589.1 L232.2,590.6 L235.0,582.0 L238.0,590.0 L241.0,588.0 L244.0,592.0 L247.0,586.0 L250.0,592.0 L253.0,588.0 L256.0,590.0 L259.0,588.0 L261.0,592.6 L263.0,594.0 L265.0,587.2 L267.0,580.0 L270.0,592.0 L272.0,591.6 L274.0,590.0 L277.0,594.0 L280.0,590.0 L283.0,592.0 L286.0,588.0 L289.0,590.0 L292.0,594.0 L294.0,602.0 L296.0,592.0 L299.0,596.0 L302.0,594.0 L305.0,590.0 L307.1,594.7 L309.2,592.3 L311.2,596.7 L313.3,588.0 L315.4,593.1 L317.4,586.8 L319.5,590.7 L321.5,587.3 L323.6,589.7 L325.7,589.6 L327.7,592.1 L329.8,588.5 L331.8,593.9 L333.9,595.1 L336.0,596.6 L338.0,588.6 L340.1,597.3 L342.1,592.3 L345.0,589.6 L346.8,586.6 L348.6,577.7 L350.4,578.6 L351.9,581.3 L355.1,584.1 L356.9,588.9 L358.7,592.3 L360.7,593.3 L362.6,585.4 L364.5,590.5 L366.4,582.8 L368.4,584.1 L370.1,589.6 L371.8,585.7 L373.5,592.7 L375.2,595.1 L377.3,596.6 L379.3,592.3 L381.4,593.4 L383.5,592.3 L385.4,591.5 L387.3,584.8 L389.2,595.0 L391.2,584.8 L393.1,586.8 L394.8,596.5 L396.5,592.3 L398.2,597.0 L399.9,597.8 L401.8,595.9 L403.6,589.3 L405.4,586.8 L407.2,592.9 L408.9,586.9 L410.6,600.0 L412.3,595.1 L414.4,596.2 L416.4,583.5 L418.5,582.9 L420.5,578.6 L422.3,581.0 L424.0,579.9 L425.7,583.1 L427.4,581.3 L429.5,585.1 L431.5,584.6 L433.6,591.1 L435.7,592.3 L437.7,590.5 L439.8,582.5 L441.8,584.4 L443.9,575.8 L445.7,580.0 L447.6,571.6 L449.4,570.3 L451.2,577.5 L453.1,579.4 L454.9,588.2 L456.8,588.8 L458.6,582.1 L460.4,581.3 L462.7,587.1 L465.1,589.6 L466.9,580.5 L468.7,570.3 L470.8,570.7 L472.9,565.4 L474.9,564.4 L477.0,562.1 L478.8,561.2 L480.6,557.1 L482.5,559.3 L484.3,568.4 L486.1,567.0 L488.0,578.6 L490.0,579.3 L492.1,578.0 L494.1,582.5 L496.2,581.3 L498.3,582.1 L500.3,580.8 L502.4,588.9 L504.5,584.1 L506.5,585.6 L508.6,578.4 L510.6,580.2 L512.7,578.6 L514.8,577.3 L516.8,574.1 L518.9,579.7 L520.9,570.3 L523.0,571.0 L525.1,566.7 L527.1,569.2 L529.2,564.8 L531.2,565.2 L533.3,561.7 L535.4,566.3 L537.4,562.1 L539.1,563.5 L540.9,556.2 L542.6,563.5 L544.3,559.3 L546.3,557.6 L548.4,551.1 L550.2,557.6 L552.1,554.1 L553.9,564.8 L555.9,572.6 L558.0,575.1 L560.0,581.1 L561.8,581.9 L563.7,578.3 L565.5,578.4 L567.3,585.5 L569.1,568.5 L571.0,572.9 L572.8,571.1 L574.6,562.9 L576.5,564.7 L578.5,574.8 L580.6,570.1 L582.4,571.7 L584.2,563.5 L586.1,564.7 L587.9,564.5 L589.7,558.4 L591.6,559.2 L593.4,563.0 L595.2,551.8 L597.0,553.7 L599.1,554.0 L601.2,550.9 L603.2,560.7 L605.3,564.7 L607.3,571.7 L609.4,570.1 L611.5,571.7 L613.5,567.4 L615.3,574.6 L617.2,573.9 L619.0,578.4 L620.8,578.5 L622.7,568.2 L624.5,564.7 L626.3,569.8 L628.1,569.1 L630.0,572.9 L631.8,571.8 L633.6,566.9 L635.5,567.4 L637.3,570.4 L639.1,560.6 L641.0,561.9 L643.0,557.2 L645.1,550.9 L647.1,551.2 L649.2,548.2 L651.0,549.7 L652.8,555.5 L654.7,548.4 L656.5,556.6 L658.3,561.1 L660.1,558.2 L662.0,562.1 L663.8,571.5 L665.6,565.7 L667.5,571.7 L669.3,573.3 L671.1,558.4 L673.0,558.0 L675.7,567.6 L677.4,566.1 L679.1,560.0 L680.9,559.3 L682.6,552.5 L684.4,559.6 L686.2,555.5 L688.1,562.1 L690.1,567.1 L692.2,564.8 L694.3,563.5 L696.3,559.3 L698.4,565.1 L700.4,562.1 L703.7,567.6 L705.9,569.0 L708.1,564.8" fill="none" stroke="#e377c2" stroke-width="1.05" stroke-linejoin="round"/>
<path d="M134.1,632.8 L137.6,637.4 L134.1,642 L130.6,637.4Z M143.5,632.8 L147.0,637.4 L143.5,642 L140.0,637.4Z M147.8,632.8 L151.3,637.4 L147.8,642 L144.3,637.4Z M152.1,632.8 L155.6,637.4 L152.1,642 L148.6,637.4Z M156.4,632.8 L159.9,637.4 L156.4,642 L152.9,637.4Z M160.7,632.8 L164.2,637.4 L160.7,642 L157.2,637.4Z M165.0,632.8 L168.5,637.4 L165.0,642 L161.5,637.4Z M169.3,632.8 L172.8,637.4 L169.3,642 L165.8,637.4Z M173.6,632.8 L177.1,637.4 L173.6,642 L170.1,637.4Z M177.9,632.8 L181.4,637.4 L177.9,642 L174.4,637.4Z M182.2,632.8 L185.7,637.4 L182.2,642 L178.7,637.4Z M186.5,632.8 L190.0,637.4 L186.5,642 L183.0,637.4Z M190.8,632.8 L194.3,637.4 L190.8,642 L187.3,637.4Z M195.1,632.8 L198.6,637.4 L195.1,642 L191.6,637.4Z M199.4,632.8 L202.9,637.4 L199.4,642 L195.9,637.4Z M203.7,632.8 L207.2,637.4 L203.7,642 L200.2,637.4Z M208.0,632.8 L211.5,637.4 L208.0,642 L204.5,637.4Z M219.3,632.8 L222.8,637.4 L219.3,642 L215.8,637.4Z M223.6,632.8 L227.1,637.4 L223.6,642 L220.1,637.4Z M228.0,632.8 L231.5,637.4 L228.0,642 L224.5,637.4Z M232.4,632.8 L235.9,637.4 L232.4,642 L228.9,637.4Z M236.8,632.8 L240.3,637.4 L236.8,642 L233.3,637.4Z M241.2,632.8 L244.7,637.4 L241.2,642 L237.7,637.4Z M245.6,632.8 L249.1,637.4 L245.6,642 L242.1,637.4Z M249.9,632.8 L253.4,637.4 L249.9,642 L246.4,637.4Z M254.3,632.8 L257.8,637.4 L254.3,642 L250.8,637.4Z M258.7,632.8 L262.2,637.4 L258.7,642 L255.2,637.4Z M263.1,632.8 L266.6,637.4 L263.1,642 L259.6,637.4Z M267.5,632.8 L271.0,637.4 L267.5,642 L264.0,637.4Z M271.9,632.8 L275.4,637.4 L271.9,642 L268.4,637.4Z M276.3,632.8 L279.8,637.4 L276.3,642 L272.8,637.4Z M280.6,632.8 L284.1,637.4 L280.6,642 L277.1,637.4Z M285.0,632.8 L288.5,637.4 L285.0,642 L281.5,637.4Z M289.4,632.8 L292.9,637.4 L289.4,642 L285.9,637.4Z M293.8,632.8 L297.3,637.4 L293.8,642 L290.3,637.4Z M298.2,632.8 L301.7,637.4 L298.2,642 L294.7,637.4Z M302.6,632.8 L306.1,637.4 L302.6,642 L299.1,637.4Z M306.9,632.8 L310.4,637.4 L306.9,642 L303.4,637.4Z M311.3,632.8 L314.8,637.4 L311.3,642 L307.8,637.4Z M315.7,632.8 L319.2,637.4 L315.7,642 L312.2,637.4Z M326.4,632.8 L329.9,637.4 L326.4,642 L322.9,637.4Z M330.8,632.8 L334.3,637.4 L330.8,642 L327.3,637.4Z M335.3,632.8 L338.8,637.4 L335.3,642 L331.8,637.4Z M339.7,632.8 L343.2,637.4 L339.7,642 L336.2,637.4Z M344.1,632.8 L347.6,637.4 L344.1,642 L340.6,637.4Z M348.5,632.8 L352.0,637.4 L348.5,642 L345.0,637.4Z M352.9,632.8 L356.4,637.4 L352.9,642 L349.4,637.4Z M357.3,632.8 L360.8,637.4 L357.3,642 L353.8,637.4Z M361.7,632.8 L365.2,637.4 L361.7,642 L358.2,637.4Z M366.1,632.8 L369.6,637.4 L366.1,642 L362.6,637.4Z M370.5,632.8 L374.0,637.4 L370.5,642 L367.0,637.4Z M390.7,632.8 L394.2,637.4 L390.7,642 L387.2,637.4Z M394.9,632.8 L398.4,637.4 L394.9,642 L391.4,637.4Z M399.0,632.8 L402.5,637.4 L399.0,642 L395.5,637.4Z M403.2,632.8 L406.7,637.4 L403.2,642 L399.7,637.4Z M416.8,632.8 L420.3,637.4 L416.8,642 L413.3,637.4Z M421.0,632.8 L424.5,637.4 L421.0,642 L417.5,637.4Z M425.3,632.8 L428.8,637.4 L425.3,642 L421.8,637.4Z M429.6,632.8 L433.1,637.4 L429.6,642 L426.1,637.4Z M433.9,632.8 L437.4,637.4 L433.9,642 L430.4,637.4Z M438.1,632.8 L441.6,637.4 L438.1,642 L434.6,637.4Z M442.4,632.8 L445.9,637.4 L442.4,642 L438.9,637.4Z M446.7,632.8 L450.2,637.4 L446.7,642 L443.2,637.4Z M451.0,632.8 L454.5,637.4 L451.0,642 L447.5,637.4Z M455.2,632.8 L458.7,637.4 L455.2,642 L451.7,637.4Z M459.5,632.8 L463.0,637.4 L459.5,642 L456.0,637.4Z M463.8,632.8 L467.3,637.4 L463.8,642 L460.3,637.4Z M468.1,632.8 L471.6,637.4 L468.1,642 L464.6,637.4Z M472.3,632.8 L475.8,637.4 L472.3,642 L468.8,637.4Z M476.6,632.8 L480.1,637.4 L476.6,642 L473.1,637.4Z M480.9,632.8 L484.4,637.4 L480.9,642 L477.4,637.4Z M485.2,632.8 L488.7,637.4 L485.2,642 L481.7,637.4Z M489.4,632.8 L492.9,637.4 L489.4,642 L485.9,637.4Z M500.3,632.8 L503.8,637.4 L500.3,642 L496.8,637.4Z M526.3,632.8 L529.8,637.4 L526.3,642 L522.8,637.4Z M530.6,632.8 L534.1,637.4 L530.6,642 L527.1,637.4Z M534.9,632.8 L538.4,637.4 L534.9,642 L531.4,637.4Z M539.2,632.8 L542.7,637.4 L539.2,642 L535.7,637.4Z M543.5,632.8 L547.0,637.4 L543.5,642 L540.0,637.4Z M547.8,632.8 L551.3,637.4 L547.8,642 L544.3,637.4Z M552.1,632.8 L555.6,637.4 L552.1,642 L548.6,637.4Z M556.4,632.8 L559.9,637.4 L556.4,642 L552.9,637.4Z M560.7,632.8 L564.2,637.4 L560.7,642 L557.2,637.4Z M565.0,632.8 L568.5,637.4 L565.0,642 L561.5,637.4Z M569.4,632.8 L572.9,637.4 L569.4,642 L565.9,637.4Z M573.7,632.8 L577.2,637.4 L573.7,642 L570.2,637.4Z M578.0,632.8 L581.5,637.4 L578.0,642 L574.5,637.4Z M582.3,632.8 L585.8,637.4 L582.3,642 L578.8,637.4Z M586.6,632.8 L590.1,637.4 L586.6,642 L583.1,637.4Z M590.9,632.8 L594.4,637.4 L590.9,642 L587.4,637.4Z M595.2,632.8 L598.7,637.4 L595.2,642 L591.7,637.4Z M599.5,632.8 L603.0,637.4 L599.5,642 L596.0,637.4Z M603.8,632.8 L607.3,637.4 L603.8,642 L600.3,637.4Z M608.1,632.8 L611.6,637.4 L608.1,642 L604.6,637.4Z M612.4,632.8 L615.9,637.4 L612.4,642 L608.9,637.4Z M616.8,632.8 L620.3,637.4 L616.8,642 L613.3,637.4Z M627.2,632.8 L630.7,637.4 L627.2,642 L623.7,637.4Z M632.3,632.8 L635.8,637.4 L632.3,642 L628.8,637.4Z M640.2,632.8 L643.7,637.4 L640.2,642 L636.7,637.4Z M644.4,632.8 L647.9,637.4 L644.4,642 L640.9,637.4Z M648.6,632.8 L652.1,637.4 L648.6,642 L645.1,637.4Z M652.7,632.8 L656.2,637.4 L652.7,642 L649.2,637.4Z M656.9,632.8 L660.4,637.4 L656.9,642 L653.4,637.4Z M661.1,632.8 L664.6,637.4 L661.1,642 L657.6,637.4Z M665.3,632.8 L668.8,637.4 L665.3,642 L661.8,637.4Z M669.5,632.8 L673.0,637.4 L669.5,642 L666.0,637.4Z M673.6,632.8 L677.1,637.4 L673.6,642 L670.1,637.4Z M677.8,632.8 L681.3,637.4 L677.8,642 L674.3,637.4Z M682.0,632.8 L685.5,637.4 L682.0,642 L678.5,637.4Z M686.2,632.8 L689.7,637.4 L686.2,642 L682.7,637.4Z M690.4,632.8 L693.9,637.4 L690.4,642 L686.9,637.4Z M694.5,632.8 L698.0,637.4 L694.5,642 L691.0,637.4Z M698.7,632.8 L702.2,637.4 L698.7,642 L695.2,637.4Z M702.9,632.8 L706.4,637.4 L702.9,642 L699.4,637.4Z M707.1,632.8 L710.6,637.4 L707.1,642 L703.6,637.4Z" fill="#ff2200"/>
<path d="M134.3,635.8 L137.9,642.9 L130.7,642.9Z M153.9,635.8 L157.5,642.9 L150.3,642.9Z M177.0,635.8 L180.6,642.9 L173.4,642.9Z M190.2,635.8 L193.8,642.9 L186.6,642.9Z M194.0,635.8 L197.6,642.9 L190.4,642.9Z M198.5,635.8 L202.1,642.9 L194.9,642.9Z M205.1,635.8 L208.7,642.9 L201.5,642.9Z M208.9,635.8 L212.5,642.9 L205.3,642.9Z M220.9,635.8 L224.5,642.9 L217.3,642.9Z M267.5,635.8 L271.1,642.9 L263.9,642.9Z M272.1,635.8 L275.7,642.9 L268.5,642.9Z M293.4,635.8 L297.0,642.9 L289.8,642.9Z M295.1,635.8 L298.7,642.9 L291.5,642.9Z M315.5,635.8 L319.1,642.9 L311.9,642.9Z M342.5,635.8 L346.1,642.9 L338.9,642.9Z M350.9,635.8 L354.5,642.9 L347.3,642.9Z M354.5,635.8 L358.1,642.9 L350.9,642.9Z M389.0,635.8 L392.6,642.9 L385.4,642.9Z M403.1,635.8 L406.7,642.9 L399.5,642.9Z M407.7,635.8 L411.3,642.9 L404.1,642.9Z M435.6,635.8 L439.2,642.9 L432.0,642.9Z M445.8,635.8 L449.4,642.9 L442.2,642.9Z M465.3,635.8 L468.9,642.9 L461.7,642.9Z M471.9,635.8 L475.5,642.9 L468.3,642.9Z M473.4,635.8 L477.0,642.9 L469.8,642.9Z M480.0,635.8 L483.6,642.9 L476.4,642.9Z M487.3,635.8 L490.9,642.9 L483.7,642.9Z M491.1,635.8 L494.7,642.9 L487.5,642.9Z M507.4,635.8 L511.0,642.9 L503.8,642.9Z M533.0,635.8 L536.6,642.9 L529.4,642.9Z M543.3,635.8 L546.9,642.9 L539.7,642.9Z M547.9,635.8 L551.5,642.9 L544.3,642.9Z M581.4,635.8 L585.0,642.9 L577.8,642.9Z M599.1,635.8 L602.7,642.9 L595.5,642.9Z M643.7,635.8 L647.3,642.9 L640.1,642.9Z M647.0,635.8 L650.6,642.9 L643.4,642.9Z M654.9,635.8 L658.5,642.9 L651.3,642.9Z M658.5,635.8 L662.1,642.9 L654.9,642.9Z M662.5,635.8 L666.1,642.9 L658.9,642.9Z M665.8,635.8 L669.4,642.9 L662.2,642.9Z M672.2,635.8 L675.8,642.9 L668.6,642.9Z M678.0,635.8 L681.6,642.9 L674.4,642.9Z M683.1,635.8 L686.7,642.9 L679.5,642.9Z M696.8,635.8 L700.4,642.9 L693.2,642.9Z" fill="#00c2c6"/>
</g>
<rect x="103.5" y="308.5" width="634" height="347" fill="none" stroke="#1a1a1a" stroke-width="1"/>
<line x1="132.4" y1="655.3" x2="132.4" y2="659.3" stroke="#1a1a1a" stroke-width="0.9"/>
<text x="132.4" y="669.5" font-family="Liberation Sans" font-size="10" font-weight="400" fill="#1a1a1a" text-anchor="middle">0</text>
<line x1="215.0" y1="655.3" x2="215.0" y2="659.3" stroke="#1a1a1a" stroke-width="0.9"/>
<text x="215.0" y="669.5" font-family="Liberation Sans" font-size="10" font-weight="400" fill="#1a1a1a" text-anchor="middle">50</text>
<line x1="297.5" y1="655.3" x2="297.5" y2="659.3" stroke="#1a1a1a" stroke-width="0.9"/>
<text x="297.5" y="669.5" font-family="Liberation Sans" font-size="10" font-weight="400" fill="#1a1a1a" text-anchor="middle">100</text>
<line x1="380.1" y1="655.3" x2="380.1" y2="659.3" stroke="#1a1a1a" stroke-width="0.9"/>
<text x="380.1" y="669.5" font-family="Liberation Sans" font-size="10" font-weight="400" fill="#1a1a1a" text-anchor="middle">150</text>
<line x1="462.7" y1="655.3" x2="462.7" y2="659.3" stroke="#1a1a1a" stroke-width="0.9"/>
<text x="462.7" y="669.5" font-family="Liberation Sans" font-size="10" font-weight="400" fill="#1a1a1a" text-anchor="middle">200</text>
<line x1="545.2" y1="655.3" x2="545.2" y2="659.3" stroke="#1a1a1a" stroke-width="0.9"/>
<text x="545.2" y="669.5" font-family="Liberation Sans" font-size="10" font-weight="400" fill="#1a1a1a" text-anchor="middle">250</text>
<line x1="627.8" y1="655.3" x2="627.8" y2="659.3" stroke="#1a1a1a" stroke-width="0.9"/>
<text x="627.8" y="669.5" font-family="Liberation Sans" font-size="10" font-weight="400" fill="#1a1a1a" text-anchor="middle">300</text>
<line x1="710.4" y1="655.3" x2="710.4" y2="659.3" stroke="#1a1a1a" stroke-width="0.9"/>
<text x="710.4" y="669.5" font-family="Liberation Sans" font-size="10" font-weight="400" fill="#1a1a1a" text-anchor="middle">350</text>
<line x1="99.5" y1="617.2" x2="103.8" y2="617.2" stroke="#1a1a1a" stroke-width="0.9"/>
<text x="95.5" y="620.8" font-family="Liberation Sans" font-size="10" font-weight="400" fill="#1a1a1a" text-anchor="end">10</text>
<line x1="99.5" y1="577.4" x2="103.8" y2="577.4" stroke="#1a1a1a" stroke-width="0.9"/>
<text x="95.5" y="581.0" font-family="Liberation Sans" font-size="10" font-weight="400" fill="#1a1a1a" text-anchor="end">20</text>
<line x1="99.5" y1="537.5" x2="103.8" y2="537.5" stroke="#1a1a1a" stroke-width="0.9"/>
<text x="95.5" y="541.1" font-family="Liberation Sans" font-size="10" font-weight="400" fill="#1a1a1a" text-anchor="end">30</text>
<line x1="99.5" y1="497.7" x2="103.8" y2="497.7" stroke="#1a1a1a" stroke-width="0.9"/>
<text x="95.5" y="501.3" font-family="Liberation Sans" font-size="10" font-weight="400" fill="#1a1a1a" text-anchor="end">40</text>
<line x1="99.5" y1="457.8" x2="103.8" y2="457.8" stroke="#1a1a1a" stroke-width="0.9"/>
<text x="95.5" y="461.4" font-family="Liberation Sans" font-size="10" font-weight="400" fill="#1a1a1a" text-anchor="end">50</text>
<line x1="99.5" y1="418.0" x2="103.8" y2="418.0" stroke="#1a1a1a" stroke-width="0.9"/>
<text x="95.5" y="421.6" font-family="Liberation Sans" font-size="10" font-weight="400" fill="#1a1a1a" text-anchor="end">60</text>
<line x1="99.5" y1="378.2" x2="103.8" y2="378.2" stroke="#1a1a1a" stroke-width="0.9"/>
<text x="95.5" y="381.8" font-family="Liberation Sans" font-size="10" font-weight="400" fill="#1a1a1a" text-anchor="end">70</text>
<line x1="99.5" y1="338.3" x2="103.8" y2="338.3" stroke="#1a1a1a" stroke-width="0.9"/>
<text x="95.5" y="341.9" font-family="Liberation Sans" font-size="10" font-weight="400" fill="#1a1a1a" text-anchor="end">80</text>
<text x="400.7" y="684" font-family="Liberation Sans" font-size="11" font-weight="400" fill="#1a1a1a" textLength="39" lengthAdjust="spacingAndGlyphs">Residue</text>
<g transform="translate(77.6,515.6) rotate(-90)"><text x="0" y="0" font-family="Liberation Sans" font-size="11" font-weight="400" fill="#1a1a1a" textLength="65.6" lengthAdjust="spacingAndGlyphs">residue B_iso</text></g>
<rect x="757.6" y="270.4" width="144" height="138" rx="2" fill="#ffffff" stroke="#cccccc" stroke-width="0.8"/>
<line x1="761" y1="279.4" x2="782" y2="279.4" stroke="#1f77b4" stroke-width="1.1"/>
<text x="789.4" y="282.1" font-family="Liberation Mono" font-size="10.6" font-weight="400" fill="#1a1a1a" textLength="106.8" lengthAdjust="spacingAndGlyphs">1l3r.pdb:chain &#39;E&#39;</text>
<line x1="761" y1="294.4" x2="782" y2="294.4" stroke="#ff7f0e" stroke-width="1.1"/>
<text x="789.4" y="297.1" font-family="Liberation Mono" font-size="10.6" font-weight="400" fill="#1a1a1a" textLength="106.8" lengthAdjust="spacingAndGlyphs">1syk.pdb:chain &#39;A&#39;</text>
<line x1="761" y1="309.4" x2="782" y2="309.4" stroke="#2ca02c" stroke-width="1.1"/>
<text x="789.4" y="312.1" font-family="Liberation Mono" font-size="10.6" font-weight="400" fill="#1a1a1a" textLength="106.8" lengthAdjust="spacingAndGlyphs">1syk.pdb:chain &#39;B&#39;</text>
<line x1="761" y1="324.4" x2="782" y2="324.4" stroke="#d62728" stroke-width="1.1"/>
<text x="789.4" y="327.1" font-family="Liberation Mono" font-size="10.6" font-weight="400" fill="#1a1a1a" textLength="106.8" lengthAdjust="spacingAndGlyphs">3dnd.pdb:chain &#39;A&#39;</text>
<line x1="761" y1="339.4" x2="782" y2="339.4" stroke="#9467bd" stroke-width="1.1"/>
<text x="789.4" y="342.1" font-family="Liberation Mono" font-size="10.6" font-weight="400" fill="#1a1a1a" textLength="106.8" lengthAdjust="spacingAndGlyphs">3dne.pdb:chain &#39;A&#39;</text>
<line x1="761" y1="354.4" x2="782" y2="354.4" stroke="#8c564b" stroke-width="1.1"/>
<text x="789.4" y="357.1" font-family="Liberation Mono" font-size="10.6" font-weight="400" fill="#1a1a1a" textLength="106.8" lengthAdjust="spacingAndGlyphs">3fhi.pdb:chain &#39;A&#39;</text>
<line x1="761" y1="369.4" x2="782" y2="369.4" stroke="#e377c2" stroke-width="1.1"/>
<text x="789.4" y="372.1" font-family="Liberation Mono" font-size="10.6" font-weight="400" fill="#1a1a1a" textLength="106.8" lengthAdjust="spacingAndGlyphs">3fjq.pdb:chain &#39;E&#39;</text>
<path d="M771.5,379.8 L775,384.4 L771.5,389 L768,384.4Z" fill="#ff2200"/>
<path d="M771.5,395.8 L775.1,402.9 L767.9,402.9Z" fill="#00c2c6"/>
<text x="789.4" y="387.1" font-family="Liberation Mono" font-size="10.6" font-weight="400" fill="#1a1a1a" textLength="48" lengthAdjust="spacingAndGlyphs">Rotamers</text>
<text x="789.4" y="402.1" font-family="Liberation Mono" font-size="10.6" font-weight="400" fill="#1a1a1a" textLength="72" lengthAdjust="spacingAndGlyphs">Ramachandran</text>
<rect x="56" y="703" width="855" height="1" fill="#c6c6c6"/>
<rect x="56" y="704" width="855" height="1" fill="#f8f8f8"/>
<circle cx="66" cy="712.7" r="6.2" fill="url(#sph)"/>
<text x="80.5" y="716" font-family="Liberation Sans" font-size="12" font-weight="400" fill="#1a1a1a" textLength="17.8" lengthAdjust="spacingAndGlyphs">Idle</text>
<text x="631.3" y="715" font-family="Liberation Sans" font-size="11.6" font-weight="400" fill="#111" textLength="112.7" lengthAdjust="spacingAndGlyphs">Project: pka-compare</text>
</svg></body></html>
